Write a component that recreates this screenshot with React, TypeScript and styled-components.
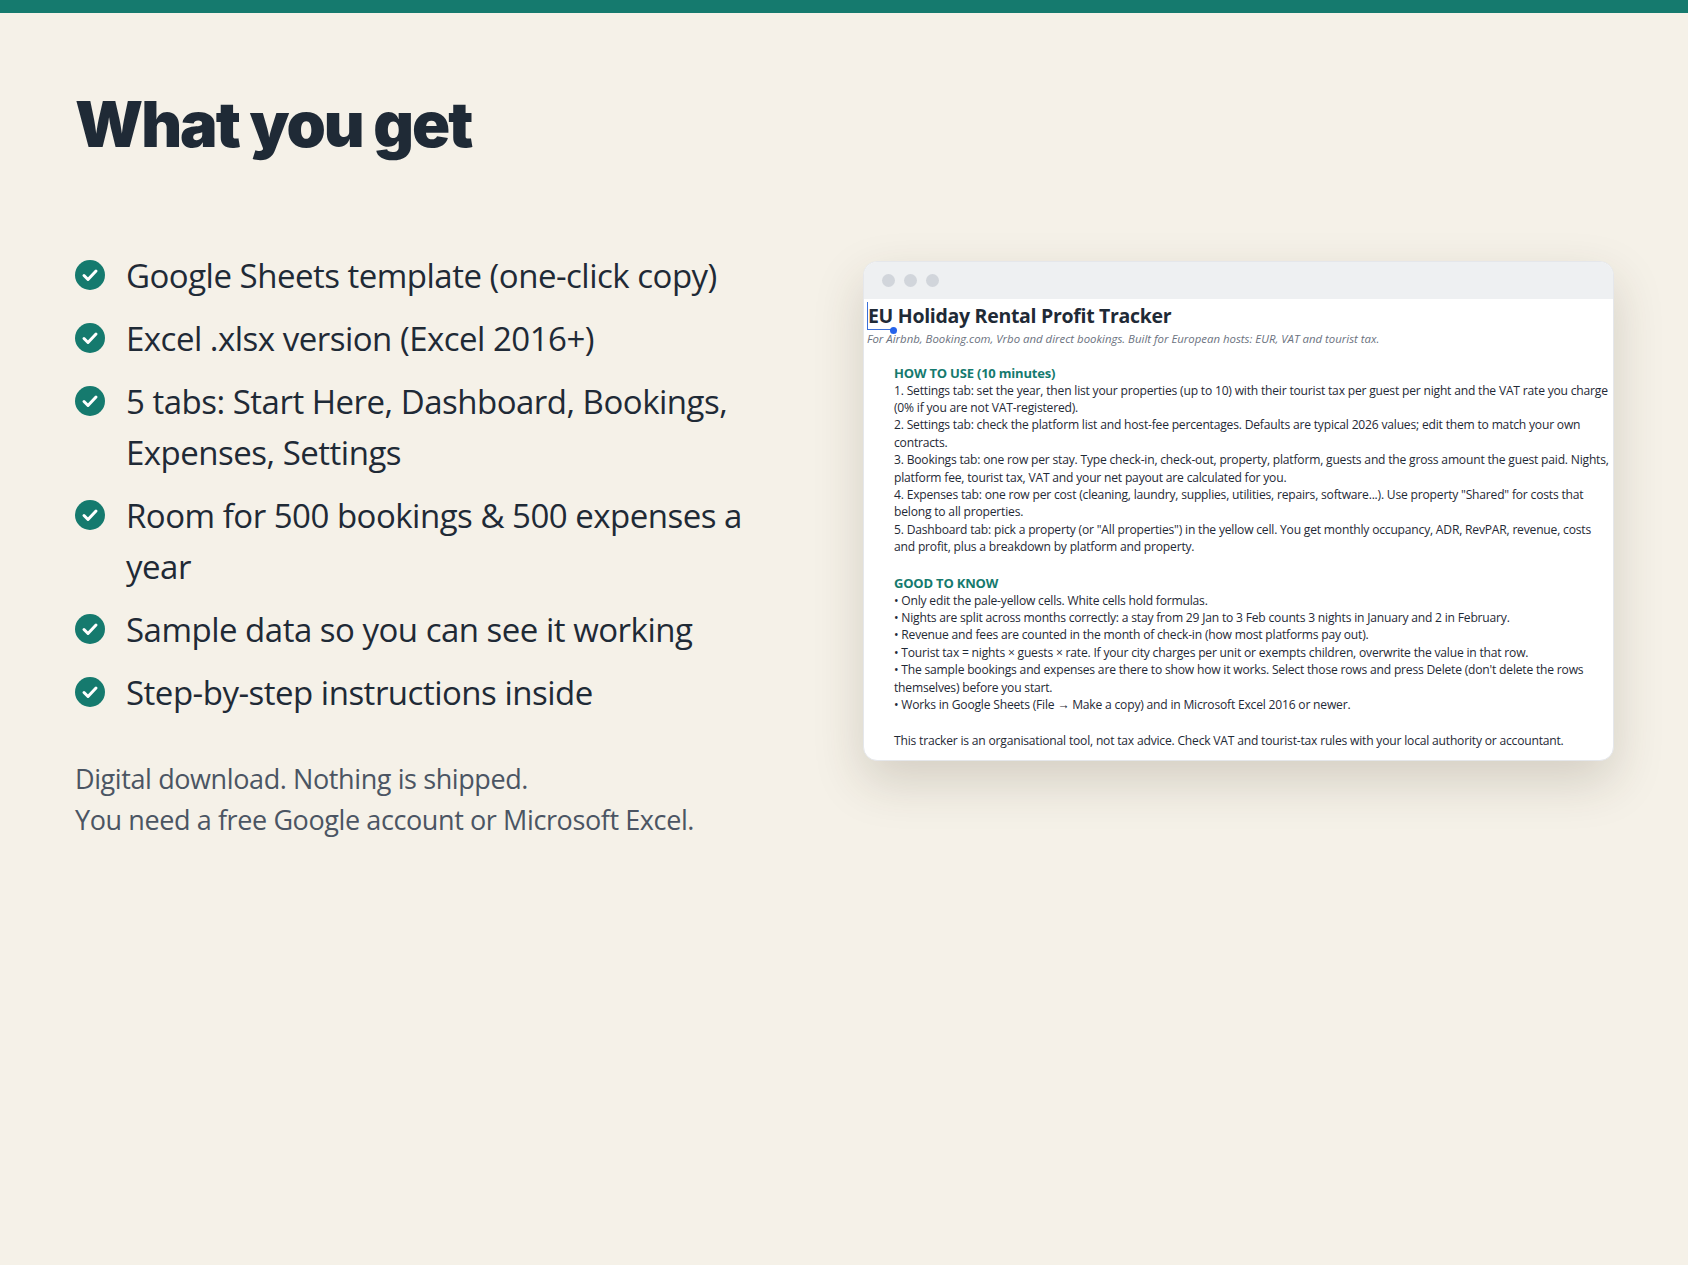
import React from "react";
import styled, { createGlobalStyle } from "styled-components";

const Global = createGlobalStyle`
  html, body { margin: 0; padding: 0; background: #f5f1e8; }
  body { font-family: "Noto Sans", "Open Sans", sans-serif; }
`;

const TopBar = styled.div`height: 13px; background: #157a6e;`;
const Page = styled.div`padding: 74px 76px 0 75px;`;
const Heading = styled.h1`
  margin: 0; font-family: Inter, sans-serif; font-weight: 900; font-size: 63px;
  letter-spacing: -2px; color: #1f2a36; line-height: 1.2;
`;
const Columns = styled.div`display: flex; gap: 98px; margin-top: 87px; align-items: flex-start;`;
const Left = styled.div`width: 690px; flex-shrink: 0;`;
const List = styled.ul`list-style: none; margin: 0; padding: 0; display: flex; flex-direction: column; gap: 12px;`;
const Item = styled.li`
  display: flex; gap: 21px; font-size: 33px; line-height: 51px; color: #1f2a36;
  font-family: "Open Sans", sans-serif; letter-spacing: -0.5px;
`;
const Icon = styled.svg`width: 30px; height: 30px; flex-shrink: 0; margin-top: 10px;`;
const Note = styled.p`
  margin: 40px 0 0; font-size: 27px; line-height: 41px; color: #4b5563;
  font-family: "Open Sans", sans-serif; letter-spacing: -0.4px;
`;
const Window = styled.div`
  width: 749px; height: 498px; margin-top: 11px; background: #fff; border-radius: 14px;
  overflow: hidden; box-shadow: 0 20px 50px rgba(60, 50, 30, 0.18); border: 1px solid #e5e7eb;
  display: flex; flex-direction: column; flex-shrink: 0;
`;
const TitleBar = styled.div`height: 37px; background: #eef0f2; display: flex; align-items: center; gap: 9px; padding-left: 18px; flex-shrink: 0;`;
const Dot = styled.span`width: 13px; height: 13px; border-radius: 50%; background: #d1d5db;`;
const Doc = styled.div`padding: 4px 0 0 3px; font-family: "Open Sans", sans-serif; color: #1f2a36;`;
const DocTitle = styled.div`font-size: 19.5px; font-weight: 700; line-height: 26px; letter-spacing: -0.3px;`;
const Cursor = styled.span`position: relative; border-left: 1.5px solid #3b6fd8; border-bottom: 1.5px solid #3b6fd8;
  &::after { content: ""; position: absolute; right: -4px; bottom: -5px; width: 7px; height: 7px; border-radius: 50%; background: #2563eb; }`;
const Sub = styled.div`font-size: 11.4px; font-style: italic; color: #6b7280; margin-top: 2px;`;
const Body = styled.div`padding: 18px 0 0 27px; font-size: 12.1px; line-height: 17.4px; letter-spacing: -0.2px;`;
const Section = styled.div<{ $first?: boolean }>`color: #157a6e; font-weight: 700; font-size: 13px; line-height: 18px; margin-top: ${p => p.$first ? 0 : 18}px;`;
const P = styled.div<{ $gap?: number }>`margin-top: ${p => p.$gap ?? 0}px;`;

const Check = () => (
  <Icon viewBox="0 0 30 30">
    <circle cx="15" cy="15" r="15" fill="#157a6e" />
    <path d="M9 15.5l4 4 8-8.5" stroke="#fff" strokeWidth="3" fill="none" strokeLinecap="round" strokeLinejoin="round" />
  </Icon>
);

const items = [
  "Google Sheets template (one-click copy)",
  "Excel .xlsx version (Excel 2016+)",
  "5 tabs: Start Here, Dashboard, Bookings, Expenses, Settings",
  "Room for 500 bookings & 500 expenses a year",
  "Sample data so you can see it working",
  "Step-by-step instructions inside",
];

export default function App() {
  return (
    <>
      <Global />
      <TopBar />
      <Page>
        <Heading>What you get</Heading>
        <Columns>
          <Left>
            <List>
              {items.map(t => (<Item key={t}><Check /><span>{t}</span></Item>))}
            </List>
            <Note>Digital download. Nothing is shipped.<br />You need a free Google account or Microsoft Excel.</Note>
          </Left>
          <Window>
            <TitleBar><Dot /><Dot /><Dot /></TitleBar>
            <Doc>
              <DocTitle><Cursor>EU</Cursor> Holiday Rental Profit Tracker</DocTitle>
              <Sub>For Airbnb, Booking.com, Vrbo and direct bookings. Built for European hosts: EUR, VAT and tourist tax.</Sub>
              <Body>
                <Section $first>HOW TO USE (10 minutes)</Section>
                <P>1. Settings tab: set the year, then list your properties (up to 10) with their tourist tax per guest per night and the VAT rate you charge (0% if you are not VAT-registered).</P>
                <P>2. Settings tab: check the platform list and host-fee percentages. Defaults are typical 2026 values; edit them to match your own contracts.</P>
                <P>3. Bookings tab: one row per stay. Type check-in, check-out, property, platform, guests and the gross amount the guest paid. Nights, platform fee, tourist tax, VAT and your net payout are calculated for you.</P>
                <P>4. Expenses tab: one row per cost (cleaning, laundry, supplies, utilities, repairs, software...). Use property "Shared" for costs that belong to all properties.</P>
                <P>5. Dashboard tab: pick a property (or "All properties") in the yellow cell. You get monthly occupancy, ADR, RevPAR, revenue, costs and profit, plus a breakdown by platform and property.</P>
                <Section>GOOD TO KNOW</Section>
                <P>• Only edit the pale-yellow cells. White cells hold formulas.</P>
                <P>• Nights are split across months correctly: a stay from 29 Jan to 3 Feb counts 3 nights in January and 2 in February.</P>
                <P>• Revenue and fees are counted in the month of check-in (how most platforms pay out).</P>
                <P>• Tourist tax = nights × guests × rate. If your city charges per unit or exempts children, overwrite the value in that row.</P>
                <P>• The sample bookings and expenses are there to show how it works. Select those rows and press Delete (don't delete the rows themselves) before you start.</P>
                <P>• Works in Google Sheets (File → Make a copy) and in Microsoft Excel 2016 or newer.</P>
                <P $gap={18}>This tracker is an organisational tool, not tax advice. Check VAT and tourist-tax rules with your local authority or accountant.</P>
              </Body>
            </Doc>
          </Window>
        </Columns>
      </Page>
    </>
  );
}
